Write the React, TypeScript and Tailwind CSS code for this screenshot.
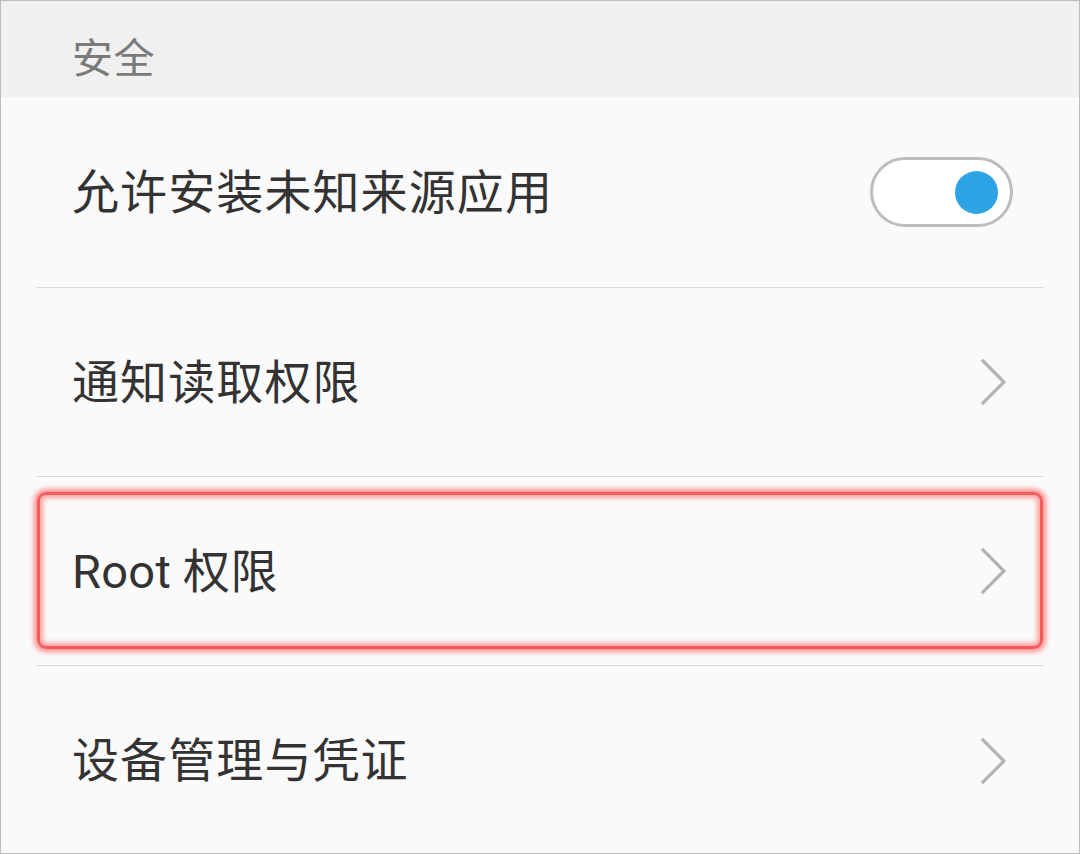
import React from 'react';

const FONT = "font-['Roboto','Noto_Sans_CJK_SC',sans-serif]";

function Chevron() {
  return (
    <svg width="26" height="48" viewBox="0 0 26 48" className="flex-shrink-0">
      <polyline points="3,3 24,24 3,45" fill="none" stroke="#b3b3b3" strokeWidth="3.2" strokeLinecap="square" />
    </svg>
  );
}

function Toggle() {
  return (
    <div className="w-[143px] h-[70px] rounded-full border-[3px] border-[#bdbdbd] bg-white flex items-center justify-end pr-[12px] mr-[-7px]">
      <div className="w-[43px] h-[43px] rounded-full bg-[#2ea3e6]" />
    </div>
  );
}

function Row({ label, toggle, highlight, last, first, tight }: { label: string; toggle?: boolean; highlight?: boolean; last?: boolean; first?: boolean; tight?: boolean }) {
  return (
    <div className={`relative mx-[35px] ${first ? 'h-[191px]' : 'h-[189px]'} flex items-center justify-between pl-[36px] pr-[38px] ${last ? '' : 'border-b border-[#d9d9d9]'}`}>
      <span className={`text-[47px] leading-none text-[#333333] ${tight ? 'tracking-[0.3px]' : 'tracking-[1.1px]'}`}>{label}</span>
      {toggle ? <Toggle /> : <Chevron />}
      {highlight && (
        <div className="absolute left-[1px] right-[1px] top-[15px] bottom-[16px] rounded-[9px] border-[3px] border-[#f45c5c] shadow-[0_0_5px_3px_rgba(255,70,70,0.6),inset_0_0_5px_3px_rgba(255,70,70,0.5)] pointer-events-none" />
      )}
    </div>
  );
}

export default function App() {
  return (
    <div className={`w-[1080px] h-[854px] bg-[#fafafa] border border-[#bcbcbc] overflow-hidden ${FONT}`}>
      <div className="h-[96px] bg-[#f0f0f0] pl-[71px] pt-[38px]">
        <span className="text-[41px] leading-none text-[#7a7a7a] tracking-[0.5px]">安全</span>
      </div>
      <Row label="允许安装未知来源应用" toggle first />
      <Row label="通知读取权限" />
      <Row label="Root 权限" highlight tight />
      <Row label="设备管理与凭证" last />
    </div>
  );
}
